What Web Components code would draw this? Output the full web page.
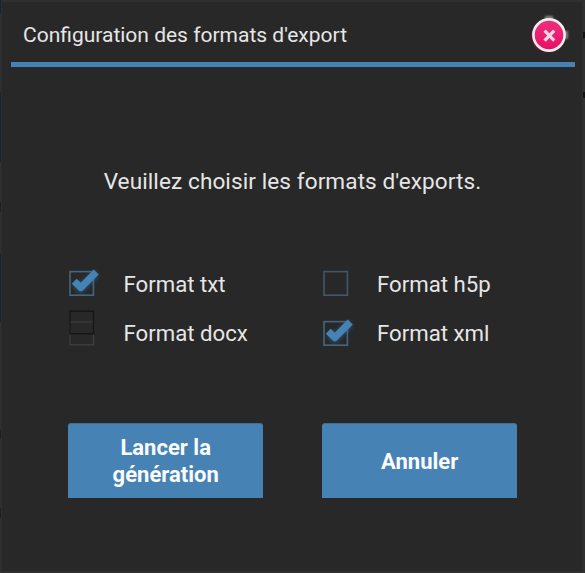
<!DOCTYPE html>
<html lang="fr">
<head>
<meta charset="utf-8">
<title>Configuration des formats d'export</title>
<style>
html,body{margin:0;height:100%;overflow:hidden}
body{font-family:Roboto,"Liberation Sans",sans-serif;color:#e6e6e6;
background:
linear-gradient(#172430,#172430) 0 0/2px 13px no-repeat,
linear-gradient(#172430,#172430) 0 92px/1px 70px no-repeat,
linear-gradient(#172430,#172430) 0 253px/1px 69px no-repeat,
linear-gradient(#202020,#202020) 0 202px/1px 10px no-repeat,
linear-gradient(#202020,#202020) 0 429px/1px 10px no-repeat,
linear-gradient(#202020,#202020) 0 508px/1px 10px no-repeat,
linear-gradient(#111,#111) 583px 32px/2px 6px no-repeat,
linear-gradient(#111,#111) 583px 92px/2px 6px no-repeat,
#303030}
</style>
</head>
<body>
<export-dialog></export-dialog>
<script>
const define = (name, html) => {
  const t = document.createElement('template');
  t.innerHTML = html;
  customElements.define(name, class extends HTMLElement {
    constructor() {
      super();
      this.attachShadow({mode: 'open'}).append(t.content.cloneNode(true));
    }
  });
};

define('close-button', `
<style>:host{display:block;width:44px;height:44px}svg{display:block}</style>
<svg width="44" height="44" viewBox="0 0 44 44" role="img" aria-label="Fermer">
  <defs><filter id="b" x="-50%" y="-50%" width="200%" height="200%"><feGaussianBlur stdDeviation="1.2"/></filter>
  <filter id="s" filterUnits="userSpaceOnUse" x="0" y="0" width="44" height="44"><feGaussianBlur stdDeviation=".8"/></filter>
  <linearGradient id="g" x1="0" y1="0" x2="0" y2="1"><stop offset="0" stop-color="#f0307c"/><stop offset="1" stop-color="#e60f66"/></linearGradient></defs>
  <circle cx="20" cy="23.5" r="15.6" fill="#a00c48" opacity=".7" filter="url(#b)"/>
  <path d="M18 4.6h8M39.4 18v8" stroke="#888" stroke-width="3" filter="url(#s)"/>
  <circle cx="22" cy="22" r="15.6" fill="url(#g)" stroke="#f5eef0" stroke-width="2.6"/>
  <path d="M17.6 17.6l9.6 10M27.2 17.6L17.6 27.6" stroke="#f8d9e5" stroke-width="3.2"/>
</svg>`);

define('check-box', `
<style>
:host{display:flex;align-items:center;height:49.5px;font-size:22.2px;white-space:nowrap}
svg{flex:none;width:54.5px;height:49px;overflow:visible}
.tick,.stale{display:none}
:host([checked]) .tick,:host([stale]) .stale{display:inline}
:host([stale]) .box{display:none}
.box{stroke:#42586a}
:host([checked]) .box{stroke:#46647d}
</style>
<svg viewBox="0 0 54.5 49" fill="none">
  <defs><filter id="g" x="-50%" y="-50%" width="200%" height="200%"><feGaussianBlur stdDeviation="2"/></filter></defs>
  <rect class="box" x="1" y="12.6" width="23.4" height="23.6" stroke-width="1.6"/>
  <g class="tick">
    <path d="M6.5 24L11.8 29.5L27.2 14" stroke="#327fb9" stroke-width="7" opacity=".6" filter="url(#g)"/>
    <path d="M5.2 22.2L11.8 28.6L27.2 13" stroke="#4682b4" stroke-width="7" stroke-linejoin="round"/>
  </g>
  <g class="stale">
    <path d="M1 13V35.8H24.5V13M1 13H25" stroke="#414141" stroke-width="1.2"/>
    <rect x="1" y="2.2" width="23.5" height="22.6" stroke="#171717" stroke-width="1.5"/>
  </g>
</svg><span><slot></slot></span>`);

define('action-button', `
<style>
:host{display:flex;align-items:center;justify-content:center;width:195px;height:75px;box-sizing:border-box;background:#4682b4;border-top:1px solid #3d6e96;border-radius:3px 3px 0 0;color:#fafcfd;font-size:22px;font-weight:700;line-height:27px;text-align:center}
</style><span><slot></slot></span>`);

define('dialog-header', `
<style>
:host{display:flex;align-items:center;justify-content:space-between;height:60px;margin:0 7px 0 9px;padding:0 4px 0 12px;border-bottom:5px solid #4682b4;font-size:21px;white-space:nowrap}
span{padding-top:6px}
close-button{margin-top:6px}
</style><span><slot></slot></span><close-button></close-button>`);

define('export-dialog', `
<style>
:host{display:flex;flex-direction:column;box-sizing:border-box;width:580px;height:571px;margin-left:2px;border-top:2px solid #303030;background:#282828;outline:1px solid #2d2d2d}
p{margin:101px 0 0;padding-left:1px;text-align:center;font-size:22.6px;letter-spacing:.08px;line-height:28px;white-space:nowrap}
.grid{display:grid;grid-template-columns:253.5px 254px;margin:63px 0 0 67px}
.actions{display:flex;gap:59px;margin:65px 0 0 66.2px}
</style>
<dialog-header>Configuration des formats d'export</dialog-header>
<p>Veuillez choisir les formats d'exports.</p>
<div class="grid">
  <check-box checked>Format txt</check-box><check-box>Format h5p</check-box>
  <check-box stale>Format docx</check-box><check-box checked>Format xml</check-box>
</div>
<div class="actions"><action-button>Lancer la<br>génération</action-button><action-button>Annuler</action-button></div>`);
</script>
</body>
</html>
